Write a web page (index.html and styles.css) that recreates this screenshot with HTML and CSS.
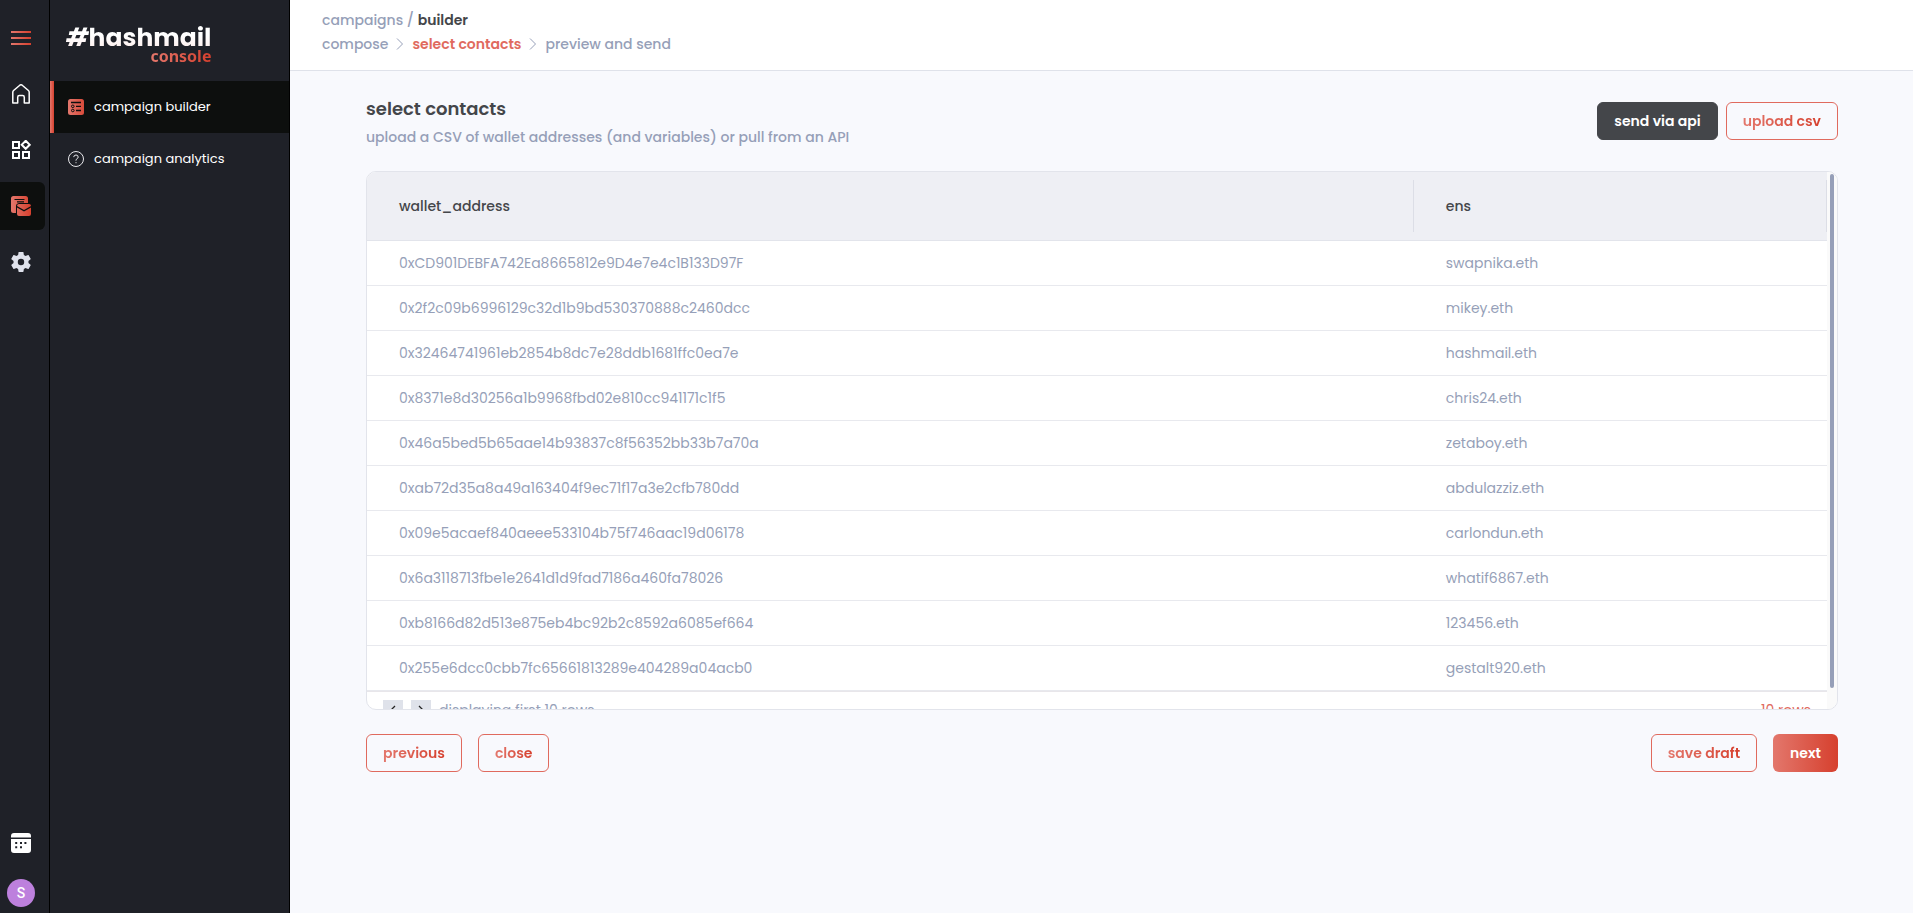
FILE: index.html
```html
<!DOCTYPE html>
<html lang="en">
<head>
<meta charset="utf-8">
<title>hashmail console</title>
<link rel="stylesheet" href="styles.css">
</head>
<body>
<svg class="defs" width="0" height="0" aria-hidden="true">
  <defs>
    <linearGradient id="brand" gradientUnits="userSpaceOnUse" x1="0" y1="0" x2="20" y2="0">
      <stop offset="0" stop-color="#e3776c"/><stop offset="1" stop-color="#d6402e"/>
    </linearGradient>
  </defs>
</svg>
<div class="app">
  <nav class="rail" aria-label="Main">
    <button class="rail-item" aria-label="Menu">
      <svg width="20" height="20" viewBox="0 0 20 20" fill="url(#brand)"><path d="M0 3h20v2H0zM0 9h20v2H0zM0 15h20v2H0z"/></svg>
    </button>
    <a class="rail-item" href="#" aria-label="Home">
      <svg width="20" height="20" viewBox="0 0 20 20" fill="none" stroke="#fff" stroke-width="1.5" stroke-linejoin="round"><path d="M1.800 19V8.200Q1.800 7.200 2.600 6.500L8.800 1.200Q10 .3 11.200 1.200L17.400 6.500Q18.200 7.200 18.200 8.200V19H13.300V13.200Q13.300 11.500 11.600 11.500H8.400Q6.700 11.500 6.700 13.200V19Z"/></svg>
    </a>
    <a class="rail-item" href="#" aria-label="Apps">
      <svg width="20" height="20" viewBox="0 0 20 20" fill="none" stroke="#fff" stroke-width="2"><path d="M2 2h6v6H2zM2 12h6v6H2zM12 12h6v6h-6zM14.700 .800 18.700 4.800 14.700 8.800 10.700 4.800z"/></svg>
    </a>
    <a class="rail-item rail-active" href="#" aria-label="Campaigns">
      <svg width="20" height="20" viewBox="0 0 20 20"><path fill="url(#brand)" d="M2.500 0H14.500Q17 0 17 2.500V7H8Q5 7.500 5 10V17H2.500Q0 17 0 14.500V2.500Q0 0 2.500 0z"/><path d="M3.500 3.500h10M6 5.800h7" stroke="#0d0f0e" stroke-width="1.200"/><path fill="url(#brand)" d="M6 10Q6 8 8 8H18Q20 8 20 10L13 14 6 10zM6 11.600 13 15.600 20 11.600V18Q20 20 18 20H8Q6 20 6 18z"/></svg>
    </a>
    <a class="rail-item" href="#" aria-label="Settings">
      <svg width="24" height="24" viewBox="0 0 24 24" fill="#dfe2ec"><path d="M19.430 12.980c.04-.32.07-.64.07-.98s-.03-.66-.07-.98l2.110-1.650c.19-.15.24-.42.12-.64l-2-3.460c-.12-.22-.39-.3-.61-.22l-2.490 1c-.52-.4-1.080-.73-1.690-.98l-.38-2.650C14.460 2.180 14.250 2 14 2h-4c-.25 0-.46.18-.49.42l-.38 2.650c-.61.25-1.170.59-1.690.98l-2.490-1c-.23-.09-.49 0-.61.22l-2 3.460c-.13.22-.07.49.12.64l2.110 1.650c-.04.32-.07.65-.07.98s.03.66.07.98l-2.110 1.650c-.19.15-.24.42-.12.64l2 3.460c.12.22.39.3.61.22l2.490-1c.52.4 1.080.73 1.690.98l.38 2.650c.03.24.24.42.49.42h4c.25 0 .46-.18.49-.42l.38-2.650c.61-.25 1.170-.59 1.690-.98l2.490 1c.23.09.49 0 .61-.22l2-3.460c.12-.22.07-.49-.12-.64zM12 15.200a3.200 3.200 0 1 1 0-6.400 3.200 3.200 0 0 1 0 6.400z"/></svg>
    </a>
    <div class="rail-bottom">
      <a class="rail-item" href="#" aria-label="Calendar">
        <svg width="20" height="20" viewBox="0 0 20 20" fill="#fff"><path d="M3 0H17Q20 0 20 3V4.500H0V3Q0 0 3 0zM0 6H20V17Q20 20 17 20H3Q0 20 0 17z"/><path fill="#1f2128" d="M4.200 9h2v2h-2zM9 9h2v2H9zM13.400 9h2v2h-2zM4.200 13.200h2v2h-2zM9 13.200h2v2H9z"/></svg>
      </a>
      <button class="avatar" aria-label="Account">S</button>
    </div>
  </nav>
  <aside class="side">
    <div class="logo">
      <span class="logo-main"><i>#</i>hashmail</span>
      <span class="logo-sub">console</span>
    </div>
    <a class="side-item side-active" href="#">
      <svg width="16" height="16" viewBox="0 0 16 16"><rect width="16" height="16" rx="2.500" fill="url(#brand)"/><g fill="none" stroke="#0d0f0e"><path d="M3 3.500h10M8 7.300h5M8 11.500h5" stroke-width="1.300"/><circle cx="4.800" cy="7.300" r="1.300"/><circle cx="4.800" cy="11.500" r="1.300"/></g></svg>
      <span>campaign builder</span>
    </a>
    <a class="side-item" href="#">
      <svg width="16" height="16" viewBox="0 0 16 16" fill="none" stroke="#e8e8ec"><circle cx="8" cy="8" r="7.500"/><path d="M5.700 6.100Q5.900 4 8 4T10.200 6Q10.200 7.100 9.100 7.700T8 9.300V9.700M8 11.200V12.200"/></svg>
      <span>campaign analytics</span>
    </a>
  </aside>
  <div class="page">
    <header class="top">
      <div class="crumbs">campaigns / <b>builder</b></div>
      <div class="crumbs steps">
        <span>compose</span>
        <svg width="8" height="12" viewBox="0 0 8 12" fill="none" stroke="#969fb8"><path d="M1 .5 6.500 6 1 11.500"/></svg>
        <span class="step-current">select contacts</span>
        <svg width="8" height="12" viewBox="0 0 8 12" fill="none" stroke="#969fb8"><path d="M1 .5 6.500 6 1 11.500"/></svg>
        <span>preview and send</span>
      </div>
    </header>
    <main class="content">
      <div class="heading">
        <div class="heading-text">
          <h1>select contacts</h1>
          <p>upload a CSV of wallet addresses (and variables) or pull from an API</p>
        </div>
        <button class="btn btn-dark">send via api</button>
        <button class="btn"><span>upload csv</span></button>
      </div>
      <section class="card">
        <div class="grid">
          <table>
            <thead><tr><th class="col-wallet"><div>wallet_address</div></th><th><div>ens</div></th></tr></thead>
            <tbody>
              <tr><td>0xCD901DEBFA742Ea8665812e9D4e7e4c1B133D97F</td><td>swapnika.eth</td></tr>
              <tr><td>0x2f2c09b6996129c32d1b9bd530370888c2460dcc</td><td>mikey.eth</td></tr>
              <tr><td>0x32464741961eb2854b8dc7e28ddb1681ffc0ea7e</td><td>hashmail.eth</td></tr>
              <tr><td>0x8371e8d30256a1b9968fbd02e810cc941171c1f5</td><td>chris24.eth</td></tr>
              <tr><td>0x46a5bed5b65aae14b93837c8f56352bb33b7a70a</td><td>zetaboy.eth</td></tr>
              <tr><td>0xab72d35a8a49a163404f9ec71f17a3e2cfb780dd</td><td>abdulazziz.eth</td></tr>
              <tr><td>0x09e5acaef840aeee533104b75f746aac19d06178</td><td>carlondun.eth</td></tr>
              <tr><td>0x6a3118713fbe1e2641d1d9fad7186a460fa78026</td><td>whatif6867.eth</td></tr>
              <tr><td>0xb8166d82d513e875eb4bc92b2c8592a6085ef664</td><td>123456.eth</td></tr>
              <tr><td>0x255e6dcc0cbb7fc65661813289e404289a04acb0</td><td>gestalt920.eth</td></tr>
            </tbody>
          </table>
          <div class="pager">
            <button class="pager-btn" aria-label="Previous page"><svg width="8" height="14" viewBox="0 0 8 14" fill="none" stroke="#222" stroke-width="1.300"><path d="M6 3 2 7l4 4"/></svg></button>
            <button class="pager-btn" aria-label="Next page"><svg width="8" height="14" viewBox="0 0 8 14" fill="none" stroke="#222" stroke-width="1.300"><path d="M2 3 6 7 2 11"/></svg></button>
            <span>displaying first 10 rows</span>
            <span class="pager-count">10 rows</span>
          </div>
        </div>
        <div class="track"><div class="thumb"></div></div>
      </section>
      <div class="actions">
        <button class="btn"><span>previous</span></button>
        <button class="btn"><span>close</span></button>
        <button class="btn push"><span>save draft</span></button>
        <button class="btn btn-primary">next</button>
      </div>
    </main>
  </div>
</div>
</body>
</html>
```
FILE: styles.css
```css
* { box-sizing: border-box; }
body {
  margin: 0;
  background: #f8f9fd;
  color: #969fb8;
  font: 14px/24px Poppins, Inter, sans-serif;
}
button { font: inherit; border: 0; background: none; padding: 0; cursor: pointer; }
a { color: inherit; text-decoration: none; }
svg { display: block; flex: none; }
.defs { position: absolute; }
.app { display: flex; min-height: 100vh; }

.rail {
  display: flex;
  flex-direction: column;
  gap: 8px;
  width: 50px;
  flex: none;
  padding: 14px 0 6px;
  background: #1f2128;
  border-right: 1px solid #000;
}
.rail-item {
  display: flex;
  align-items: center;
  justify-content: center;
  width: 45px;
  height: 48px;
  padding-right: 3px;
  border-radius: 0 6px 6px 0;
}
.rail-active { background: #0d0f0e; }
.rail-bottom { margin-top: auto; display: flex; flex-direction: column; gap: 12px; }
.avatar {
  width: 28px;
  height: 28px;
  margin-left: 7px;
  border-radius: 50%;
  background: #bd80dd;
  color: #fff;
  font: 500 14px/28px Roboto, sans-serif;
}

.side {
  width: 240px;
  flex: none;
  background: #1f2128;
  border-right: 1px solid #000;
  color: #fff;
}
.logo {
  display: flex;
  flex-direction: column;
  align-items: flex-end;
  width: fit-content;
  height: 81px;
  padding: 26px 0 0 16px;
}
.logo-main {
  font-size: 25px;
  font-weight: 700;
  line-height: 24px;
  background: linear-gradient(#fff 40%, #fdeceb);
  -webkit-background-clip: text;
  background-clip: text;
  color: transparent;
}
.logo-sub {
  font: 700 16px/12px "Noto Sans", sans-serif;
  background: linear-gradient(90deg, #e3776c, #d6402e);
  -webkit-background-clip: text;
  background-clip: text;
  color: transparent;
}
.side-item {
  display: flex;
  align-items: center;
  gap: 10px;
  height: 52px;
  padding-left: 18px;
  font-size: 13px;
}
.side-active {
  background: linear-gradient(90deg, #e3776c, #d6402e) left / 4px 100% no-repeat #0d0f0e;
}

.page { flex: 1; min-width: 0; }
.top {
  padding: 8px 32px 14px;
  background: #fff;
  border-bottom: 1px solid #dfe2ea;
}
.crumbs { font-weight: 500; }
.crumbs b { color: #44464a; font-weight: 600; }
.steps { display: flex; align-items: center; gap: 8px; }
.steps .step-current { color: #e06a5e; font-weight: 600; }

.content { padding: 24px 75px 0 76px; }
.heading { display: flex; align-items: center; gap: 8px; height: 76px; padding-bottom: 24px; }
.heading-text { flex: 1; padding-top: 4px; }
h1 { margin: 0; color: #44464a; font-size: 18px; line-height: 28px; font-weight: 600; }
p { margin: 0; line-height: 28px; font-weight: 500; }

.btn {
  height: 38px;
  padding: 0 16px;
  border: 1px solid #e06a5e;
  border-radius: 6px;
  font-weight: 600;
  color: #fff;
}
.btn span {
  background: linear-gradient(90deg, #e3776c, #d6402e);
  -webkit-background-clip: text;
  background-clip: text;
  color: transparent;
}
.btn-dark { background: #44464a; border-color: #44464a; }
.btn-primary { background: linear-gradient(90deg, #e3776c, #d6402e); border: 0; padding: 0 17px; }
.push { margin-left: auto; }

.card {
  display: flex;
  height: 539px;
  background: #fff;
  border: 1px solid #e2e4eb;
  border-radius: 10px;
  overflow: hidden;
}
.grid { flex: 1; }
table { width: 100%; border-collapse: separate; border-spacing: 0; table-layout: fixed; border-bottom: 1px solid #e8e6ea; }
th {
  height: 69px;
  padding: 0;
  background: #eeeff4;
  border-bottom: 1px solid #e2e4eb;
  color: #44464a;
  font-weight: 500;
  text-align: left;
}
th div { height: 52px; padding-left: 32px; line-height: 52px; border-right: 1px solid #dcdee6; }
td { height: 45px; padding: 0 32px; border-bottom: 1px solid #e8e9ee; }
.col-wallet { width: 71.7%; }
.pager { display: flex; align-items: center; padding: 6px 16px; gap: 8px; }
.pager-btn {
  display: flex;
  align-items: center;
  justify-content: center;
  width: 20px;
  height: 20px;
  background: #dfe2ea;
}
.pager-count { margin-left: auto; color: #e06a5e; }
.track { width: 10px; padding: 2px 3px; background: #fafafa; }
.thumb { width: 4px; height: 514px; border-radius: 2px; background: #969fb8; }

.actions { display: flex; gap: 16px; padding-top: 24px; }
```
